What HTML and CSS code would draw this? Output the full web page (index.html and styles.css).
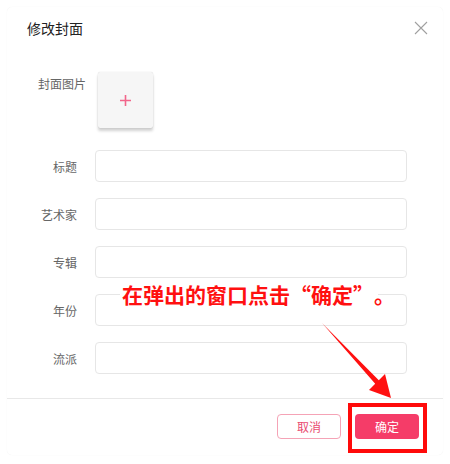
FILE: index.html
```html
<!DOCTYPE html>
<html>
<head>
    <title>修改封面</title>
    <link rel="stylesheet" href="styles.css">
</head>
<body>
    <div class="dialog">
        <div class="dialog-header">
            <span class="dialog-title">修改封面</span>
            <svg class="close-btn" width="14" height="14" viewBox="0 0 14 14">
                <path d="M1 1 L13 13 M13 1 L1 13" stroke="#a0a0a0" stroke-width="1.1" fill="none"/>
            </svg>
        </div>
        <div class="dialog-body">
            <div class="form-row upload-row">
                <label class="form-label">封面图片</label>
                <div class="upload-box">
                    <svg width="11" height="11" viewBox="0 0 11 11">
                        <path d="M5.5 0 V11 M0 5.5 H11" stroke="#f2668b" stroke-width="1.6" fill="none"/>
                    </svg>
                </div>
            </div>
            <div class="form-row">
                <label class="form-label">标题</label>
                <input type="text" class="form-input">
            </div>
            <div class="form-row">
                <label class="form-label">艺术家</label>
                <input type="text" class="form-input">
            </div>
            <div class="form-row">
                <label class="form-label">专辑</label>
                <input type="text" class="form-input">
            </div>
            <div class="form-row">
                <label class="form-label">年份</label>
                <input type="text" class="form-input">
            </div>
            <div class="form-row">
                <label class="form-label">流派</label>
                <input type="text" class="form-input">
            </div>
        </div>
        <div class="dialog-footer">
            <button class="btn btn-cancel">取消</button>
            <button class="btn btn-ok">确定</button>
        </div>
    </div>

    <!-- 教程标注 -->
    <div class="note">在弹出的窗口点击<span class="q-open">“</span>确定<span class="q-close">”</span>。</div>
    <svg class="arrow" width="450" height="464" viewBox="0 0 450 464">
        <polygon points="322,323 378.8,380.3 385,374 391,398 369,390 375.2,383.7" fill="#ff1010"/>
    </svg>
    <div class="mark-box"></div>
</body>
</html>
```

FILE: styles.css
```css
body {
    margin: 0;
    width: 450px;
    height: 464px;
    background-color: #fff;
    font-family: "Noto Sans CJK SC", "Noto Sans", sans-serif;
    position: relative;
    overflow: hidden;
}
.dialog {
    margin: 7px;
    width: 436px;
    height: 448px;
    box-sizing: border-box;
    background: #fff;
    border-radius: 5px;
    box-shadow: 0 0 1px rgba(0, 0, 0, 0.08);
    display: flex;
    flex-direction: column;
}
.dialog-header {
    display: flex;
    justify-content: space-between;
    align-items: center;
    padding: 11px 15px 0 20px;
    height: 20px;
}
.dialog-title {
    font-size: 14px;
    line-height: 20px;
    color: #222;
}
.dialog-body {
    padding-top: 34px;
    display: flex;
    flex-direction: column;
    gap: 16px;
    flex: 1;
}
.form-row {
    display: flex;
    align-items: center;
    gap: 18px;
}
.upload-row {
    align-items: flex-start;
    gap: 12px;
    margin-bottom: 6px;
}
.form-label {
    width: 70px;
    text-align: right;
    font-size: 12px;
    color: #666;
}
.upload-row .form-label {
    width: 79px;
    line-height: 24px;
}
.upload-box {
    width: 55px;
    height: 56px;
    background: #f6f6f6;
    border-radius: 2px;
    box-shadow: 0 0 1px rgba(0, 0, 0, 0.2), 0 3px 3px rgba(0, 0, 0, 0.18);
    display: flex;
    align-items: center;
    justify-content: center;
}
.form-input {
    width: 312px;
    height: 32px;
    box-sizing: border-box;
    border: 1px solid #e6e6e6;
    border-radius: 4px;
    outline: none;
}
.dialog-footer {
    border-top: 1px solid #e8e8e8;
    display: flex;
    justify-content: flex-end;
    gap: 14px;
    padding: 15px 24px 16px 0;
}
.btn {
    width: 64px;
    height: 25px;
    border-radius: 4px;
    font-size: 12px;
    font-family: "Noto Sans CJK SC", sans-serif;
    cursor: pointer;
}
.btn-cancel {
    background: #fff;
    color: #e94a70;
    border: 1px solid #f5a3b6;
}
.btn-ok {
    background: #f53c68;
    color: #fff;
    border: none;
}
.note {
    position: absolute;
    left: 120px;
    top: 278px;
    width: 256px;
    height: 32px;
    background: #fff;
    color: #ff1010;
    font-size: 21px;
    font-weight: bold;
    line-height: 33px;
    padding-left: 2px;
    white-space: nowrap;
}
.q-open, .q-close {
    display: inline-block;
    width: 21px;
}
.q-open {
    text-align: right;
}
.q-close {
    text-align: left;
}
.arrow {
    position: absolute;
    left: 0;
    top: 0;
}
.mark-box {
    position: absolute;
    left: 348px;
    top: 403px;
    width: 79px;
    height: 50px;
    box-sizing: border-box;
    border: 4px solid #ff0a0a;
}
```
